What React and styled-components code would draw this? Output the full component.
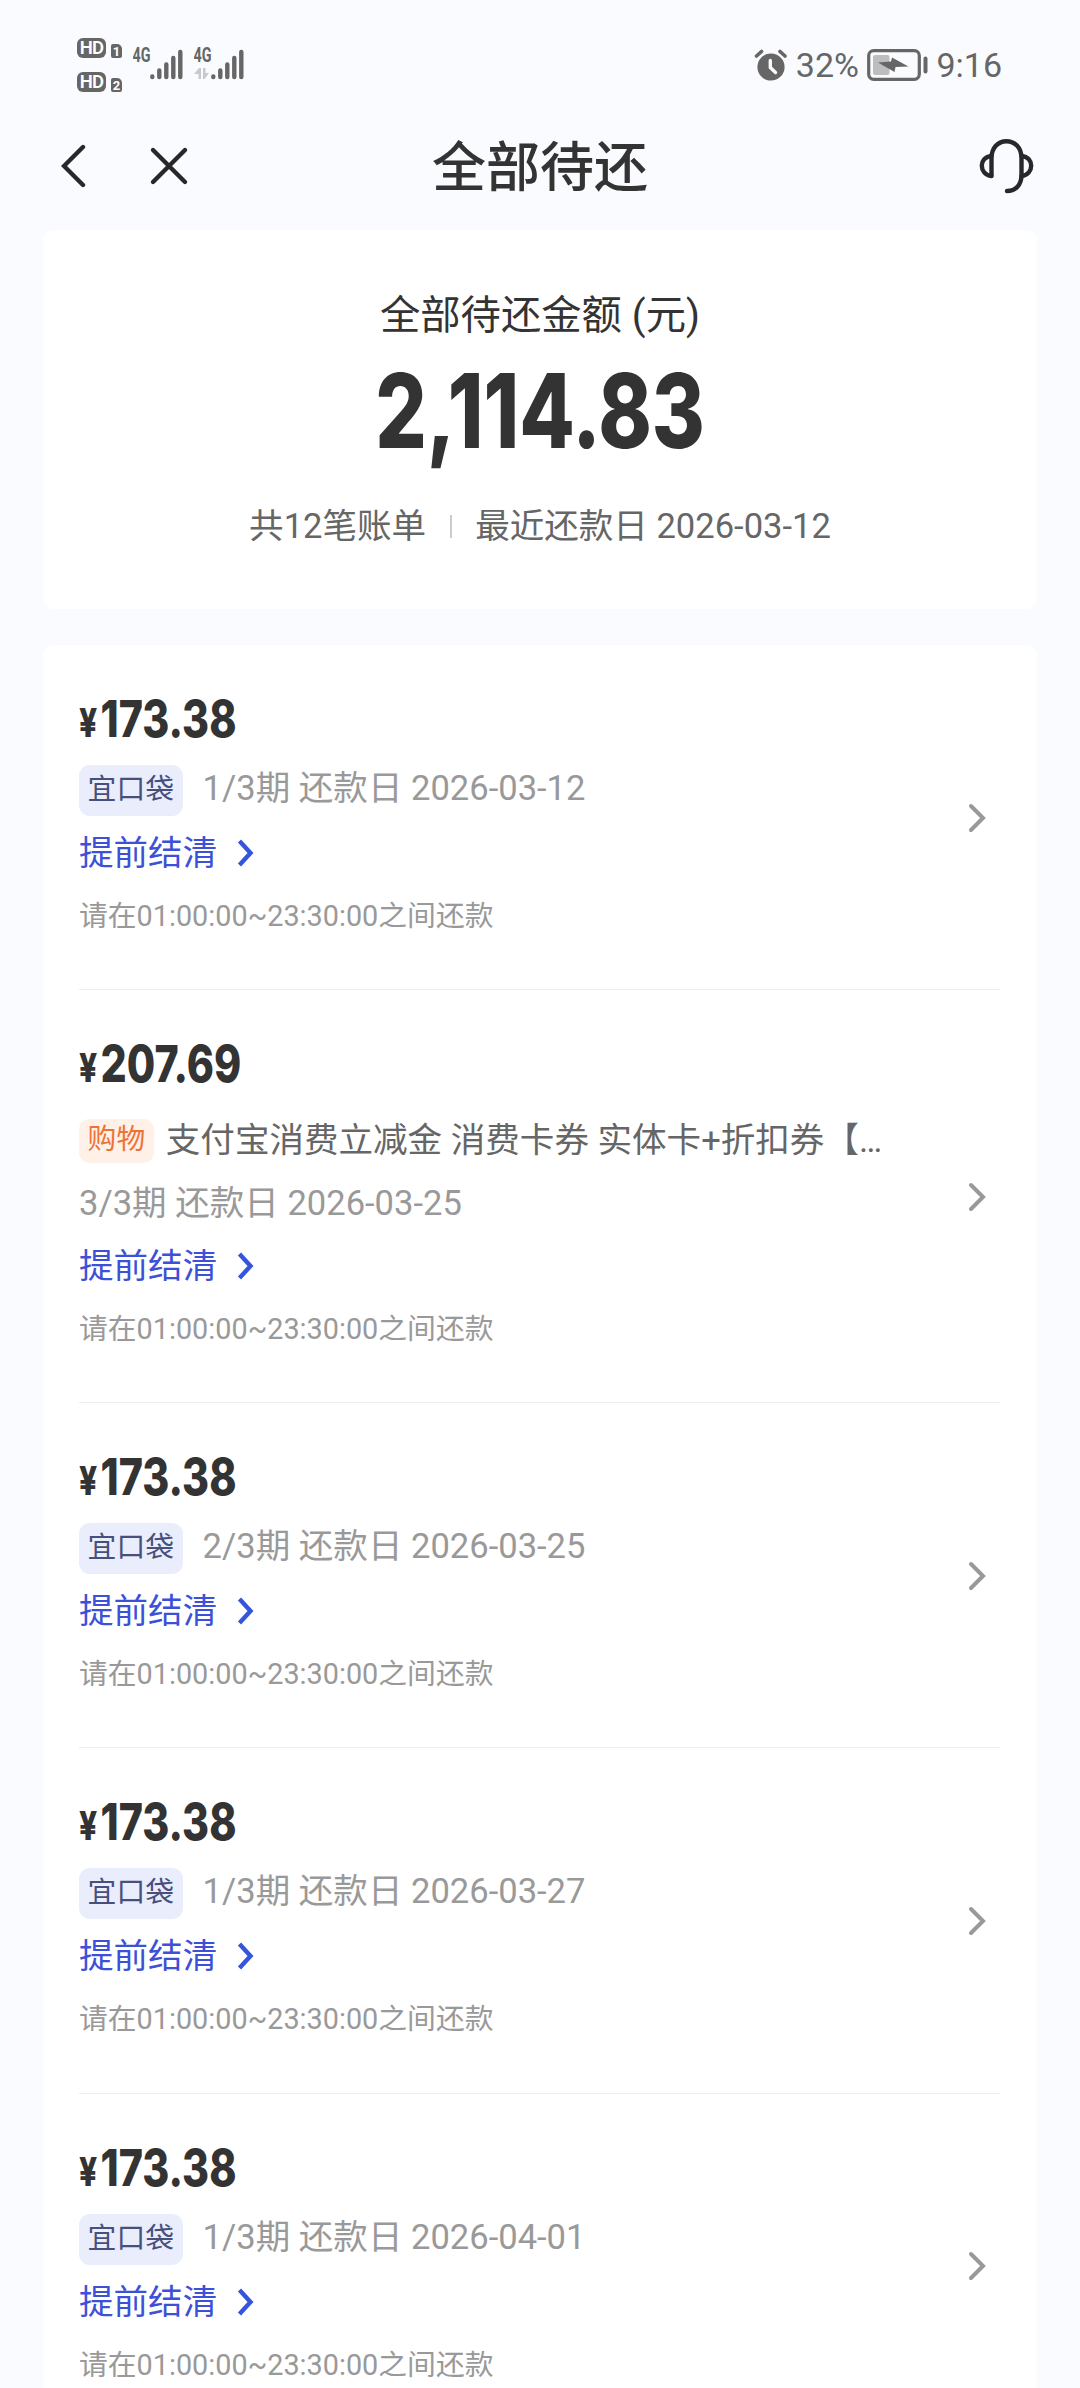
// Libraries
import React from "react";
import styled, { createGlobalStyle } from "styled-components";

const bills = [
  { id: 1, amount: "173.38", tag: "宜口袋", info: "1/3期 还款日 2026-03-12" },
  {
    id: 2,
    amount: "207.69",
    tag: "购物",
    goods: "支付宝消费立减金 消费卡券 实体卡+折扣券【…",
    info: "3/3期 还款日 2026-03-25",
  },
  { id: 3, amount: "173.38", tag: "宜口袋", info: "2/3期 还款日 2026-03-25" },
  { id: 4, amount: "173.38", tag: "宜口袋", info: "1/3期 还款日 2026-03-27" },
  { id: 5, amount: "173.38", tag: "宜口袋", info: "1/3期 还款日 2026-04-01" },
];

function Signal({ data }) {
  return (
    <svg width="50" height="52" viewBox="0 -8 50 52">
      <text x="-0.500" y="15" fontFamily="Roboto" fontWeight="700" fontSize="19.500" fill="#666" textLength="18" lengthAdjust="spacingAndGlyphs">
        4G
      </text>
      {data && (
        <g fill="#c9c9cb">
          <path d="M0 27 L5 21 H7 V32 H4.500 V27 Z" />
          <path d="M9 21 H11.500 V26 H15 L10.500 32 H9 Z" />
        </g>
      )}
      <g stroke="#666" strokeWidth="4.4" strokeLinecap="round">
        <path d="M19.300 30 V29.500 M26.300 30 V23.500 M33.300 30 V17.500 M40.300 30 V11 M47.300 30 V5" />
      </g>
    </svg>
  );
}

function HdBadge({ sim }) {
  return (
    <HdRow>
      <HdBox>HD</HdBox>
      <SimBox>{sim}</SimBox>
    </HdRow>
  );
}

function StatusBar() {
  return (
    <Status>
      <HdColumn>
        <HdBadge sim="1" />
        <HdBadge sim="2" />
      </HdColumn>
      <Signals>
        <Signal />
        <Signal data />
      </Signals>
      <svg width="34" height="34" viewBox="0 0 34 34">
        <circle cx="17" cy="19" r="13.6" fill="#666" />
        <path d="M2.500 8 L7.500 3.500 M31 8 L26 3.500" stroke="#666" strokeWidth="3.6" strokeLinecap="round" />
        <path d="M16.300 12.500 V19.500 L21.500 24.500" stroke="#fafbff" strokeWidth="3.4" strokeLinecap="round" strokeLinejoin="round" fill="none" />
      </svg>
      <StatusText $left={7.5}>32%</StatusText>
      <Battery width="62" height="32" viewBox="0 0 62 32">
        <rect x="1.700" y="1.700" width="50.600" height="28.600" rx="5" fill="none" stroke="#666" strokeWidth="3.200" />
        <rect x="6" y="6" width="16.500" height="20" rx="2" fill="#bdbdbf" />
        <path d="M11 13.500 L24 12.500 L25 8.500 L41.500 17.500 L28.500 18 L27.500 23 Z" fill="#666" />
        <rect x="56.500" y="7.500" width="4" height="17" rx="2" fill="#666" />
      </Battery>
      <StatusText $left={7.5}>9:16</StatusText>
    </Status>
  );
}

function BillItem({ bill }) {
  return (
    <Item>
      <ItemBody>
        <Amount>
          <Yen>¥</Yen>
          {bill.amount}
        </Amount>
        {bill.goods ? (
          <>
            <GoodsRow>
              <GoodsTag>{bill.tag}</GoodsTag>
              <Goods>{bill.goods}</Goods>
            </GoodsRow>
            <Info $top={17}>{bill.info}</Info>
          </>
        ) : (
          <TagRow>
            <Tag>{bill.tag}</Tag>
            <Info>{bill.info}</Info>
          </TagRow>
        )}
        <Settle $top={bill.goods ? 20 : 17}>
          提前结清
          <svg width="20" height="30" viewBox="0 0 20 30">
            <path d="M3.500 3 L14.500 15 L3.500 27" fill="none" stroke="#3455dc" strokeWidth="4.400" />
          </svg>
        </Settle>
        <Notice>请在01:00:00~23:30:00之间还款</Notice>
      </ItemBody>
      <Arrow width="20" height="32" viewBox="0 0 20 32">
        <path d="M3 4 L15 16 L3 28" fill="none" stroke="#999" strokeWidth="4" strokeLinecap="round" />
      </Arrow>
    </Item>
  );
}

export default function App() {
  return (
    <Page>
      <GlobalStyle />
      <StatusBar />
      <NavBar>
        <NavLeft>
          <svg width="26" height="46" viewBox="0 0 26 46">
            <path d="M22 4 L3 23 L22 42" fill="none" stroke="#28282a" strokeWidth="4.400" strokeLinecap="round" />
          </svg>
          <svg width="40" height="40" viewBox="0 0 40 40">
            <path d="M4 4 L36 36 M36 4 L4 36" fill="none" stroke="#28282a" strokeWidth="4.400" strokeLinecap="round" />
          </svg>
        </NavLeft>
        <Title>全部待还</Title>
        <NavRight>
          <svg width="56" height="58" viewBox="0 0 56 58">
            <g fill="none" stroke="#28282a" strokeWidth="4.400" strokeLinecap="round">
              <path d="M12.500 38 V21 C12.500 11 19 4.200 27.500 4.200 C36 4.200 42.500 11 42.500 21 V38 C42.500 48 36.500 54 28 54" />
              <path d="M12.500 19 C6 19.500 2.800 24 2.800 28.500 C2.800 33.500 6 38.500 12.500 39" />
              <path d="M42.500 19 C49 19.500 52.200 24 52.200 28.500 C52.200 33.500 49 38.500 42.500 39" />
            </g>
          </svg>
        </NavRight>
      </NavBar>

      <Summary>
        <SummaryLabel>全部待还金额 (元)</SummaryLabel>
        <Total>2,114.83</Total>
        <SummaryMeta>
          <span>共12笔账单</span>
          <Bar />
          <span>最近还款日 2026-03-12</span>
        </SummaryMeta>
      </Summary>

      <List>
        {bills.map((bill) => (
          <BillItem key={bill.id} bill={bill} />
        ))}
      </List>
    </Page>
  );
}

const GlobalStyle = createGlobalStyle`
  body {
    margin: 0;
    background: #fafbff;
  }

  * {
    box-sizing: border-box;
  }

  svg {
    display: block;
    flex-shrink: 0;
  }
`;

const Page = styled.div`
  width: 1080px;
  height: 2388px;
  overflow: hidden;
  background: #fafbff;
  color: #333;
  font-family: Roboto, "Noto Sans CJK SC", sans-serif;
`;

const Status = styled.div`
  display: flex;
  align-items: center;
  height: 130px;
  padding: 0 78px 0 77px;
  color: #666;
`;

const HdColumn = styled.div`
  display: flex;
  flex-direction: column;
  gap: 14px;
`;

const HdRow = styled.div`
  display: flex;
  align-items: flex-end;
  gap: 5px;
`;

const HdBox = styled.div`
  width: 29px;
  height: 20px;
  border-radius: 6px;
  background: #666;
  color: #fff;
  font-size: 18.5px;
  font-weight: 600;
  letter-spacing: -0.8px;
  line-height: 20px;
  text-align: center;
`;

const SimBox = styled.div`
  width: 11px;
  height: 14px;
  border-radius: 2px 5px 2px 2px;
  background: #666;
  color: #fff;
  font-size: 13px;
  font-weight: 700;
  line-height: 15px;
  text-align: center;
`;

const Signals = styled.div`
  display: flex;
  gap: 11px;
  margin: 0 auto 0 10.5px;
`;

const StatusText = styled.span`
  margin-left: ${(props) => props.$left}px;
  font-size: 34px;
  line-height: 40px;
`;

const Battery = styled.svg`
  margin-left: 8px;
`;

const NavBar = styled.div`
  display: grid;
  grid-template-columns: 1fr auto 1fr;
  align-items: center;
  height: 72px;
  margin-bottom: 28px;
  padding: 0 45px;
`;

const NavLeft = styled.div`
  display: flex;
  align-items: center;
  gap: 62px;
  padding-left: 16px;
`;

const NavRight = styled.div`
  display: flex;
  justify-content: flex-end;
`;

const Title = styled.h1`
  margin: 0 0 -3px;
  padding-top: 3px;
  font-size: 54px;
  font-weight: 500;
  line-height: 72px;
`;

const Summary = styled.section`
  display: flex;
  flex-direction: column;
  align-items: center;
  height: 379px;
  margin: 0 43px;
  padding-top: 61px;
  border-radius: 11px;
  background: #fff;
`;

const SummaryLabel = styled.div`
  font-size: 40.32px;
  line-height: 50px;
`;

const Total = styled.div`
  height: 110px;
  margin-top: 15px;
  font-family: Inter, Roboto, sans-serif;
  font-size: 103px;
  font-weight: 800;
  line-height: 110px;
  transform: scaleX(0.785);
`;

const SummaryMeta = styled.div`
  display: flex;
  align-items: center;
  gap: 23.5px;
  margin-top: 40px;
  color: #666;
  font-size: 34.56px;
  line-height: 40px;
`;

const Bar = styled.i`
  width: 2px;
  height: 23px;
  background: #ccc;
`;

const List = styled.section`
  margin: 36px 43px 0;
  padding: 0 37px 0 36px;
  border-radius: 11px 11px 0 0;
  background: #fff;
`;

const Item = styled.article`
  display: flex;
  align-items: center;
  justify-content: space-between;
  padding: 44px 12px 56.3px 0;
  border-bottom: 1px solid #eeeef1;
`;

const ItemBody = styled.div`
  display: flex;
  flex-direction: column;
  align-items: flex-start;
`;

const Arrow = styled.svg`
  margin-top: 13px;
`;

const Amount = styled.div`
  height: 60px;
  font-family: Inter, Roboto, sans-serif;
  font-size: 51.5px;
  font-weight: 800;
  line-height: 59px;
  transform: scaleX(0.8);
  transform-origin: left;
`;

const Yen = styled.span`
  margin-right: 4px;
  font-size: 39.5px;
  line-height: 1;
`;

const TagRow = styled.div`
  display: flex;
  align-items: flex-start;
  margin-top: 16px;
  gap: 20px;
`;

const GoodsRow = styled.div`
  display: flex;
  align-items: flex-start;
  margin-top: 24.5px;
  gap: 12px;
`;

const Tag = styled.span`
  height: 51px;
  padding: 0 8.6px;
  border-radius: 11px;
  background: #e9edfc;
  color: #474f7d;
  font-size: 28.8px;
  line-height: 49px;
`;

const GoodsTag = styled(Tag)`
  height: 44px;
  background: #fff0e8;
  color: #ed7437;
  line-height: 41px;
`;

const Goods = styled.span`
  color: #666;
  font-size: 34.56px;
  line-height: 42px;
  white-space: nowrap;
`;

const Info = styled.div`
  margin-top: ${(props) => props.$top || 0}px;
  color: #999;
  font-size: 34.56px;
  line-height: 46px;
`;

const Settle = styled.div`
  display: flex;
  align-items: center;
  gap: 19px;
  margin-top: ${(props) => props.$top}px;
  color: #3d50d8;
  font-size: 34.56px;
  line-height: 40px;
`;

const Notice = styled.div`
  margin-top: 26px;
  color: #999;
  font-size: 28.8px;
  line-height: 34px;
`;
